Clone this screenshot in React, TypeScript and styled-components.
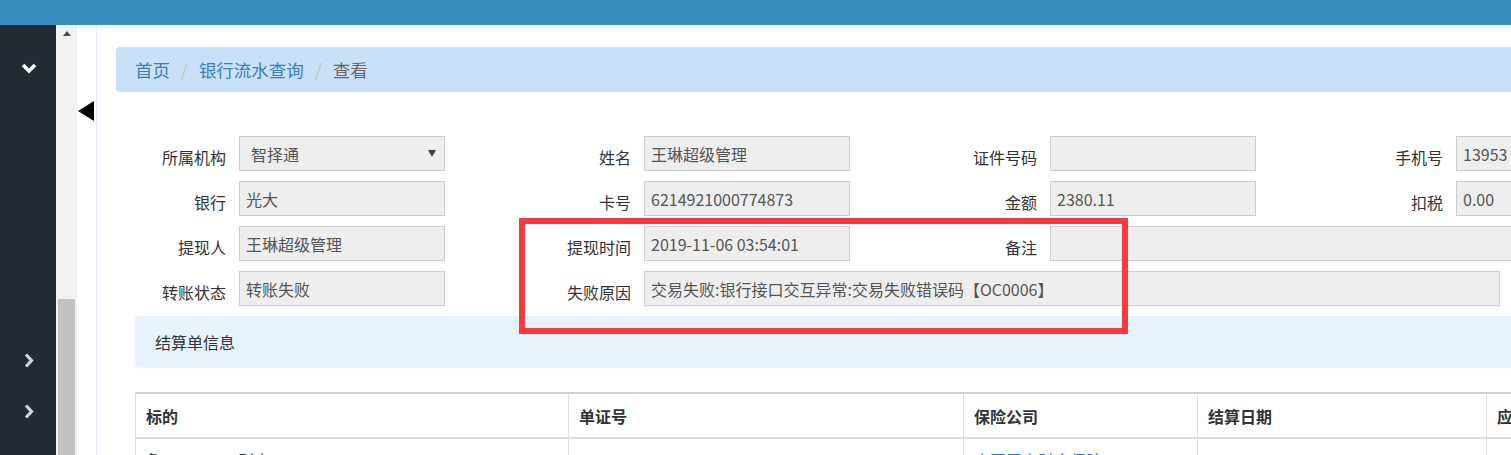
import React from 'react';
import styled, { createGlobalStyle } from 'styled-components';

const GlobalStyle = createGlobalStyle`
  html, body {
    margin: 0;
    padding: 0;
    overflow: hidden;
    background: #fff;
  }
  body {
    font-family: "Noto Sans CJK SC", "Noto Sans", sans-serif;
    font-size: 16px;
    color: #333;
  }
  * {
    box-sizing: border-box;
  }
`;

type Item = { label: string; value?: string; kind?: 'select'; span?: number; width?: number };

const rows: Item[][] = [
  [
    { label: '所属机构', value: '智择通', kind: 'select' },
    { label: '姓名', value: '王琳超级管理' },
    { label: '证件号码', value: '' },
    { label: '手机号', value: '13953' },
  ],
  [
    { label: '银行', value: '光大' },
    { label: '卡号', value: '6214921000774873' },
    { label: '金额', value: '2380.11' },
    { label: '扣税', value: '0.00' },
  ],
  [
    { label: '提现人', value: '王琳超级管理' },
    { label: '提现时间', value: '2019-11-06 03:54:01' },
    { label: '备注', value: '', span: 3 },
  ],
  [
    { label: '转账状态', value: '转账失败' },
    { label: '失败原因', value: '交易失败:银行接口交互异常:交易失败错误码【OC0006】', span: 5, width: 856 },
  ],
];

const columns = [
  { title: '标的', width: 433 },
  { title: '单证号', width: 395 },
  { title: '保险公司', width: 234 },
  { title: '结算日期', width: 289 },
  { title: '应付金额', width: 300 },
];

function Chevron({ dir, color }: { dir: 'down' | 'right'; color: string }) {
  if (dir === 'down') {
    return (
      <svg width="16" height="11" viewBox="0 0 16 11">
        <polyline points="2,2 8,8 14,2" fill="none" stroke={color} strokeWidth="3.6" />
      </svg>
    );
  }
  return (
    <svg width="10" height="15" viewBox="0 0 10 15">
      <polyline points="2,1.5 7.5,7.5 2,13.5" fill="none" stroke={color} strokeWidth="3.2" />
    </svg>
  );
}

export default function App() {
  return (
    <>
      <GlobalStyle />
      <Page>
        <TopBar />
        <Body>
          <Sidebar>
            <MenuItem>
              <Chevron dir="down" color="#ffffff" />
            </MenuItem>
            <SubMenu />
            <MenuItem>
              <Chevron dir="right" color="#cdd6e0" />
            </MenuItem>
            <MenuItem>
              <Chevron dir="right" color="#cdd6e0" />
            </MenuItem>
            <MenuItem>
              <Chevron dir="right" color="#cdd6e0" />
            </MenuItem>
          </Sidebar>
          <ScrollTrack>
            <UpButton>
              <UpArrow />
            </UpButton>
            <Thumb />
          </ScrollTrack>
          <Gutter>
            <CollapseToggle />
          </Gutter>
          <Main>
            <Breadcrumb>
              <Crumb>首页</Crumb>
              <Sep>/</Sep>
              <Crumb>银行流水查询</Crumb>
              <Sep>/</Sep>
              <Crumb $active>查看</Crumb>
            </Breadcrumb>
            <Section>
              <Form>
                {rows.map((row, ri) =>
                  row.map((it, ci) => (
                    <React.Fragment key={`${ri}-${ci}`}>
                      <Label>{it.label}</Label>
                      <Field $span={it.span ?? 1} $width={it.width} $select={it.kind === 'select'}>
                        {it.value}
                        {it.kind === 'select' && <Caret />}
                      </Field>
                    </React.Fragment>
                  ))
                )}
              </Form>
              <Panel>结算单信息</Panel>
              <Table>
                <colgroup>
                  {columns.map((c) => (
                    <col key={c.title} style={{ width: c.width }} />
                  ))}
                </colgroup>
                <thead>
                  <tr>
                    {columns.map((c) => (
                      <Th key={c.title}>{c.title}</Th>
                    ))}
                  </tr>
                </thead>
                <tbody>
                  <tr>
                    <Td>鲁B·7K562 别克</Td>
                    <Td>PDAA201937020000</Td>
                    <Td>
                      <LinkText>中国平安财产保险</LinkText>
                    </Td>
                    <Td>2019-11-05</Td>
                    <Td>2380.11</Td>
                  </tr>
                </tbody>
              </Table>
            </Section>
            <Highlight />
          </Main>
        </Body>
      </Page>
    </>
  );
}

const Page = styled.div`
  width: 100vw;
  height: 100vh;
  display: flex;
  flex-direction: column;
  overflow: hidden;
`;

const TopBar = styled.div`
  height: 25px;
  flex: none;
  background-color: #3b8fc0;
`;

const Body = styled.div`
  flex: 1;
  display: flex;
  min-height: 0;
`;

const Sidebar = styled.div`
  width: 56px;
  flex: none;
  background-color: #232a33;
  display: flex;
  flex-direction: column;
  padding-top: 18px;
`;

const MenuItem = styled.div`
  height: 51px;
  flex: none;
  display: flex;
  align-items: center;
  justify-content: center;
  padding-left: 2px;
`;

const SubMenu = styled.div`
  height: 241px;
  flex: none;
`;

const ScrollTrack = styled.div`
  width: 21px;
  flex: none;
  background-color: #f1f1f1;
  display: flex;
  flex-direction: column;
  align-items: center;
`;

const UpButton = styled.div`
  height: 17px;
  flex: none;
  width: 100%;
  display: flex;
  align-items: center;
  justify-content: center;
`;

const UpArrow = styled.div`
  width: 0;
  height: 0;
  border-left: 4.5px solid transparent;
  border-right: 4.5px solid transparent;
  border-bottom: 5px solid #505050;
`;

const Thumb = styled.div`
  margin-top: 257px;
  width: 17px;
  height: 300px;
  flex: none;
  background-color: #c1c1c1;
`;

const Gutter = styled.div`
  width: 19px;
  flex: none;
  position: relative;
`;

const CollapseToggle = styled.div`
  position: absolute;
  left: 1px;
  top: 76px;
  width: 0;
  height: 0;
  border-top: 10px solid transparent;
  border-bottom: 10px solid transparent;
  border-right: 16px solid #000;
`;

const Main = styled.div`
  flex: 1;
  min-width: 0;
  position: relative;
  overflow: hidden;
  border-left: 1px solid #e2edf9;
  padding: 22px 0 0 19px;
`;

const Breadcrumb = styled.div`
  width: 1640px;
  height: 45px;
  display: flex;
  align-items: center;
  padding: 0 19px;
  background-color: #c8e1f8;
  border-radius: 4px;
  font-size: 17.5px;
  line-height: 24px;
`;

const Crumb = styled.span<{ $active?: boolean }>`
  color: ${(p) => (p.$active ? '#6f6666' : '#3c7fc0')};
`;

const Sep = styled.span`
  color: #c4c4c4;
  padding: 0 11px 0 11px;
`;

const Section = styled.div`
  padding-left: 19px;
  width: 1660px;
`;

const Form = styled.div`
  margin-top: 44px;
  display: grid;
  grid-template-columns: 104px 206px 199px 206px 200px 206px 200px 206px;
  grid-auto-rows: 35px;
  row-gap: 10px;
`;

const Label = styled.div`
  text-align: right;
  padding: 9px 13px 0 0;
  line-height: 24px;
  font-size: 16px;
  color: #333;
  white-space: nowrap;
`;

const Field = styled.div<{ $span: number; $width?: number; $select?: boolean }>`
  grid-column: span ${(p) => p.$span};
  ${(p) => (p.$width ? `width: ${p.$width}px; justify-self: start;` : '')}
  height: 35px;
  display: flex;
  align-items: center;
  padding: 0 ${(p) => (p.$select ? '8px 0 11px' : '6px')};
  background-color: #eeeeee;
  border: 1px solid #cfcfcf;
  color: #555;
  font-size: 16px;
  line-height: 24px;
  white-space: nowrap;
  overflow: hidden;
`;

const Caret = styled.span`
  margin-left: auto;
  width: 0;
  height: 0;
  border-left: 4px solid transparent;
  border-right: 4px solid transparent;
  border-top: 7px solid #444;
`;

const Panel = styled.div`
  margin-top: 10px;
  height: 51px;
  display: flex;
  align-items: center;
  padding: 0 20px;
  background-color: #e8f2fc;
  border-radius: 4px;
  box-shadow: 0 1px 1px rgba(0, 0, 0, 0.05);
  font-size: 16px;
  color: #333;
`;

const Table = styled.table`
  margin-top: 25px;
  width: 1651px;
  table-layout: fixed;
  border-collapse: separate;
  border-spacing: 0;
  border-top: 2px solid #cfcfcf;
  border-left: 1px solid #dddddd;
`;

const Th = styled.th`
  height: 45px;
  padding: 0 10px;
  text-align: left;
  font-weight: bold;
  font-size: 16px;
  color: #333;
  border-right: 1px solid #dddddd;
  border-bottom: 2px solid #dddddd;
  white-space: nowrap;
`;

const Td = styled.td`
  padding: 9px 10px 8px;
  line-height: 24px;
  font-size: 16px;
  color: #333;
  border-right: 1px solid #dddddd;
  white-space: nowrap;
  overflow: hidden;
`;

const LinkText = styled.span`
  color: #2d74bb;
`;

const Highlight = styled.div`
  position: absolute;
  left: 422px;
  top: 193px;
  width: 609px;
  height: 116px;
  border: 6px solid #f5393c;
  pointer-events: none;
`;
